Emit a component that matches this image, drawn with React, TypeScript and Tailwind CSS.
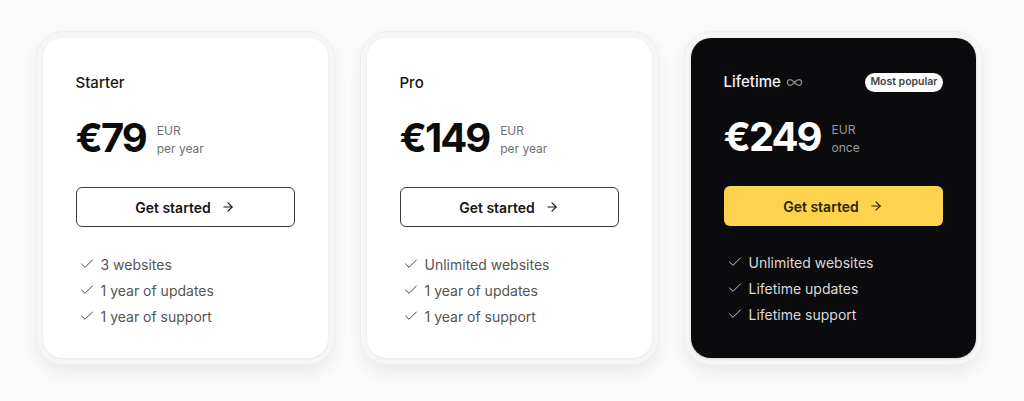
import { ArrowRight, Check, Infinity as InfinityIcon } from "lucide-react";

type Plan = {
  name: string;
  price: string;
  period: string;
  features: string[];
  dark?: boolean;
};

const plans: Plan[] = [
  { name: "Starter", price: "€79", period: "per year", features: ["3 websites", "1 year of updates", "1 year of support"] },
  { name: "Pro", price: "€149", period: "per year", features: ["Unlimited websites", "1 year of updates", "1 year of support"] },
  { name: "Lifetime", price: "€249", period: "once", features: ["Unlimited websites", "Lifetime updates", "Lifetime support"], dark: true },
];

function PlanCard({ plan }: { plan: Plan }) {
  const dark = plan.dark;
  return (
    <div className="rounded-[27px] border border-[#efefef] bg-[#f6f6f6] p-[6px] shadow-[0_8px_16px_rgba(0,0,0,0.07)]">
      <div
        className={
          dark
            ? "w-[285px] h-[320px] rounded-[20px] bg-[#0b0b0d] px-[33px] pt-[32px] shadow-[0_1px_3px_rgba(0,0,0,0.15)]"
            : "w-[285px] h-[320px] rounded-[20px] bg-white px-[33px] pt-[33px] shadow-[0_1px_3px_rgba(0,0,0,0.06)]"
        }
      >
        <div className="flex h-[24px] items-center justify-between">
          <div className={dark ? "flex items-center gap-[5px] text-[15px] font-medium text-[#f2f2f2]" : "text-[15px] font-medium text-[#161616]"}>
            {plan.name}
            {dark && <InfinityIcon size={17} strokeWidth={1.75} className="text-[#8a8a8a]" />}
          </div>
          {dark && (
            <div className="flex h-[19px] items-center rounded-full bg-white px-[5px] text-[10.5px] font-semibold text-[#444444]">
              Most popular
            </div>
          )}
        </div>

        <div className="mt-[23px] flex items-start gap-[11px]">
          <div className={dark ? "text-[40px] leading-[40px] font-bold tracking-[-2px] text-white" : "text-[40px] leading-[40px] font-bold tracking-[-2px] text-[#0b0b0b]"}>
            {plan.price}
          </div>
          <div className={dark ? "mt-[4px] text-[12px] leading-[18px] text-[#9a9a9a]" : "mt-[4px] text-[12px] leading-[18px] text-[#707070]"}>
            <div>EUR</div>
            <div>{plan.period}</div>
          </div>
        </div>

        <button
          className={
            dark
              ? "mt-[29px] flex h-[40px] w-full items-center justify-center gap-[10px] rounded-[6px] bg-[#fdd24d] text-[14px] font-semibold text-[#2e2300]"
              : "mt-[29px] flex h-[40px] w-full items-center justify-center gap-[10px] rounded-[6px] border border-[#3a3a3a] bg-white text-[14px] font-semibold text-[#161616]"
          }
        >
          Get started
          <ArrowRight size={14} strokeWidth={2} />
        </button>

        <ul className={dark ? "mt-[26px] flex flex-col gap-[6px]" : "mt-[27px] flex flex-col gap-[6px]"}>
          {plan.features.map((f) => (
            <li key={f} className={dark ? "flex h-[20px] items-center gap-[6px] text-[14px] text-[#dadada]" : "flex h-[20px] items-center gap-[6px] text-[14px] text-[#555555]"}>
              <Check size={16} strokeWidth={1.5} className={dark ? "ml-[3px] text-[#cfcfcf]" : "ml-[3px] text-[#444444]"} />
              {f}
            </li>
          ))}
        </ul>
      </div>
    </div>
  );
}

export default function App() {
  return (
    <div className="min-h-[401px] w-full bg-[#fbfbfb] pt-[31px]" style={{ fontFamily: "Inter, 'Noto Sans', sans-serif" }}>
      <div className="flex justify-center gap-[25px] pr-[6px]">
        {plans.map((p) => (
          <PlanCard key={p.name} plan={p} />
        ))}
      </div>
    </div>
  );
}
